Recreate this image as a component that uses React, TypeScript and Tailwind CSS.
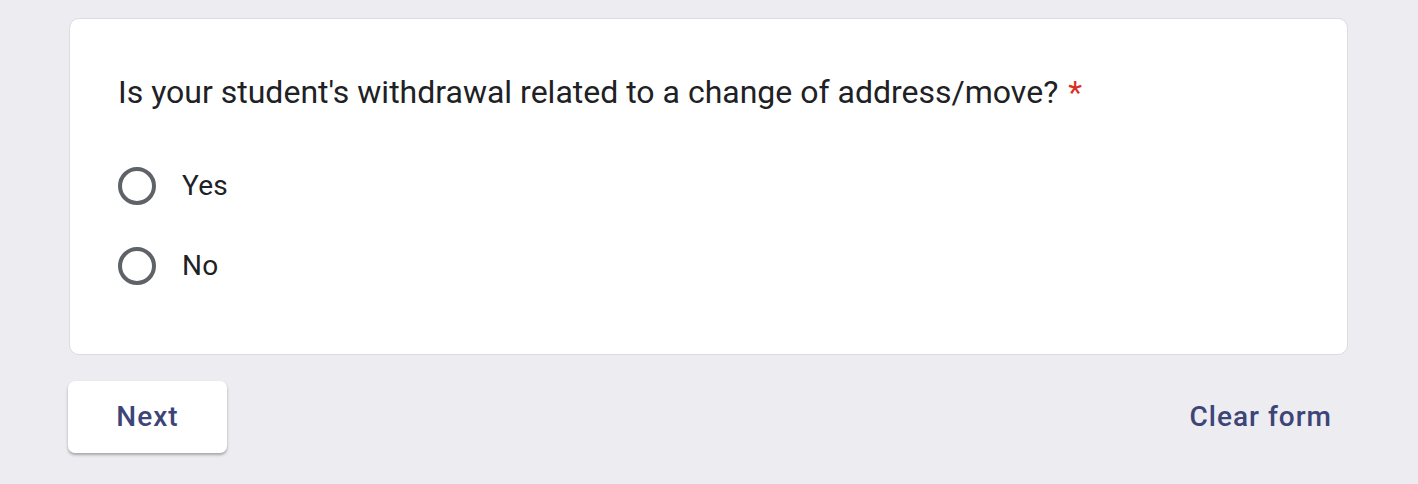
export default function App() {
  return (
    <div className="min-h-[484px] w-full bg-[#edecf1] pt-[18px] font-['Roboto',sans-serif]">
      <div className="ml-[69px] w-[1279px]">
        {/* Question card */}
        <div className="rounded-[10px] border border-[#dadce0] bg-white px-[48px] pb-[48px] pt-[55px]">
          <div className="text-[32px] leading-[36px] text-[#202124]">
            Is your student's withdrawal related to a change of address/move?
            <span className="ml-[10px] text-[#d93025]">*</span>
          </div>
          <div className="mt-[36px]">
            {['Yes', 'No'].map(opt => (
              <label key={opt} className="flex h-[80px] cursor-pointer items-center">
                <span className="h-[38px] w-[38px] rounded-full border-[4px] border-[#5f6368]" />
                <span className="ml-[26px] text-[28px] tracking-[0.2px] text-[#202124]">{opt}</span>
              </label>
            ))}
          </div>
        </div>

        {/* Footer */}
        <div className="mt-[26px] flex items-center justify-between">
          <button className="-ml-[1px] h-[72px] w-[159px] rounded-[7px] bg-white text-[28px] font-medium tracking-[1px] text-[#3c4478] shadow-[0_2px_3px_rgba(0,0,0,0.3)]">
            Next
          </button>
          <button className="mr-[16px] text-[28px] font-medium tracking-[1px] text-[#3c4478]">
            Clear form
          </button>
        </div>
      </div>
    </div>
  )
}
